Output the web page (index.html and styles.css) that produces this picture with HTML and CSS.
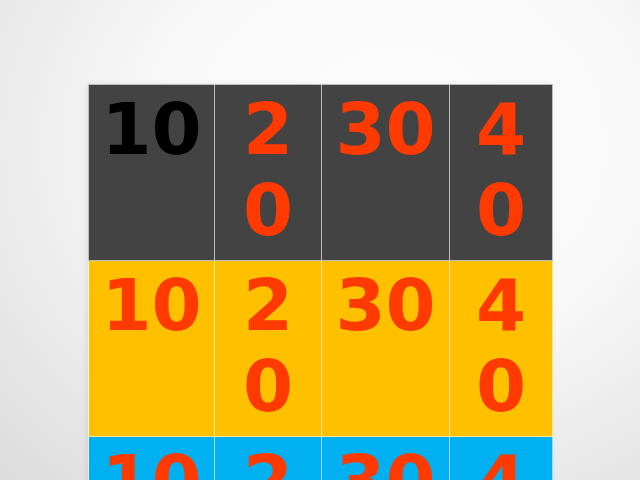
FILE: index.html
```html
<!DOCTYPE html>
<html lang="en">
<head>
    <meta charset="UTF-8">
    <title>10 20 30 40</title>
    <link rel="stylesheet" href="styles.css">
</head>
<body>
    <div class="slide">
        <table class="scores">
            <colgroup>
                <col class="c1">
                <col class="c2">
                <col class="c3">
                <col class="c4">
            </colgroup>
            <tr class="dark">
                <td class="black">10</td>
                <td>20</td>
                <td>30</td>
                <td>40</td>
            </tr>
            <tr class="yellow">
                <td>10</td>
                <td>20</td>
                <td>30</td>
                <td>40</td>
            </tr>
            <tr class="blue">
                <td>10</td>
                <td>20</td>
                <td>30</td>
                <td>40</td>
            </tr>
        </table>
    </div>
</body>
</html>
```

FILE: styles.css
```css
html, body {
    margin: 0;
    height: 100%;
}
body {
    overflow: hidden;
    background: radial-gradient(ellipse at 62% 30%, #ffffff 0%, #f8f8f8 45%, #dcdcdc 100%);
    font-family: "DejaVu Sans", sans-serif;
}
.slide {
    padding: 84px 0 0 88px;
}
.scores {
    border-collapse: collapse;
    table-layout: fixed;
    width: 464px;
    box-shadow: -2px 0 6px rgba(0, 0, 0, 0.08);
}
.c1 { width: 126px; }
.c2 { width: 107px; }
.c3 { width: 128px; }
.c4 { width: 103px; }
.scores td {
    height: 176px;
    padding: 4px 4px 0;
    border: 1px solid rgba(255, 255, 255, 0.6);
    vertical-align: top;
    text-align: center;
    font-size: 72px;
    font-weight: bold;
    line-height: 81px;
    color: #ff3a00;
    word-break: break-all;
    box-sizing: border-box;
}
.dark td {
    background-color: #434343;
    border-color: #bdbdbd;
}
.yellow td {
    background-color: #ffc000;
}
.blue td {
    background-color: #00b0f0;
}
.scores td.black {
    color: #000;
}
```
